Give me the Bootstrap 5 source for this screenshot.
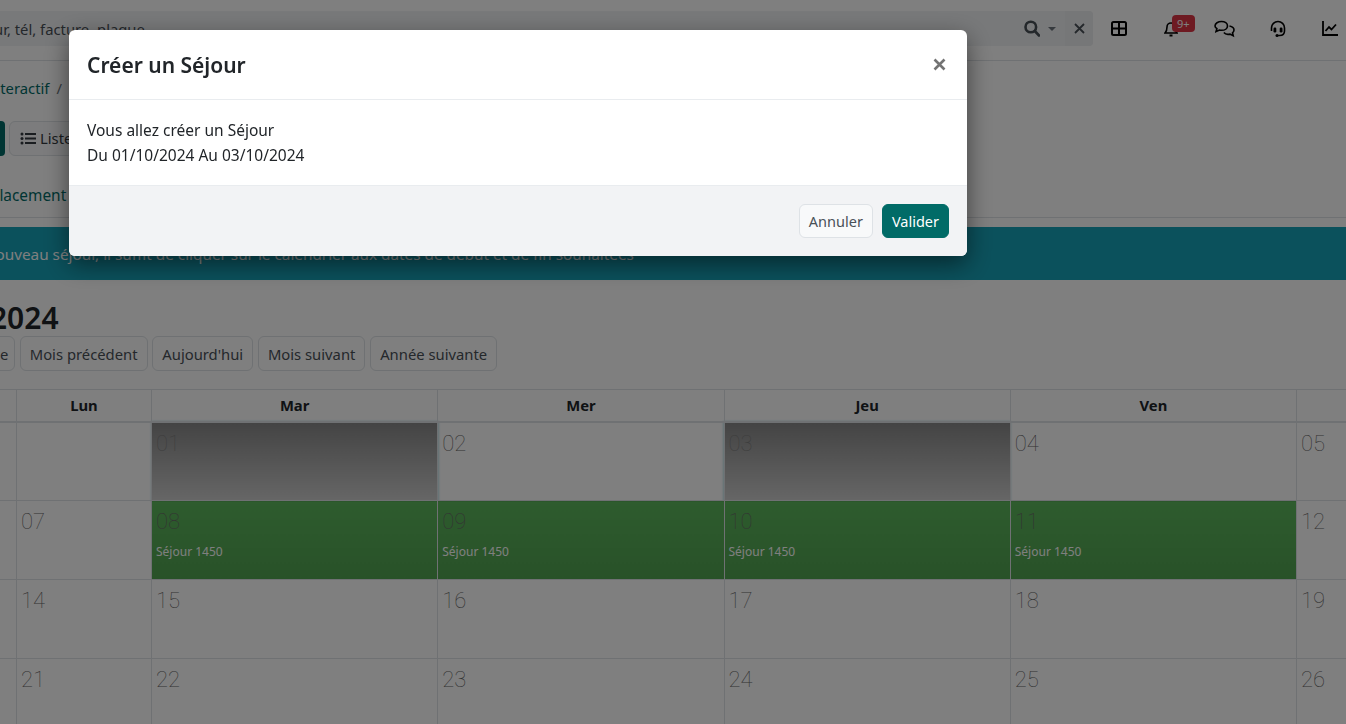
<!DOCTYPE html>
<html lang="fr">
<head>
  <meta charset="UTF-8">
  <meta name="viewport" content="width=device-width, initial-scale=1.0">
  <title>Calendrier interactif</title>
  <link href="https://cdn.jsdelivr.net/npm/bootstrap@5.3.0/dist/css/bootstrap.min.css" rel="stylesheet">
  <script src="https://cdn.jsdelivr.net/npm/bootstrap@5.3.0/dist/js/bootstrap.bundle.min.js"></script>
  <style>
    html, body { height: 100%; overflow: hidden; }
    body { font-family: "Noto Sans", "Open Sans", sans-serif; font-size: 14.8px; color: #212529; background: #fff; }

    /* page behind the dialog, scrolled sideways in the reference */
    .page-wrap { width: 1346px; overflow: hidden; height: 724px; }
    .top-bar { height: 61px; background: #fff; border-bottom: 1px solid #dee2e6; padding-top: 11px; }
    .search-box { width: 1093px; height: 35px; background: #f1f3f5; border-radius: 0 4px 4px 0; color: #495057; flex-shrink: 0; }
    .search-text { margin-left: -42px; line-height: 38px; white-space: nowrap; }
    .search-glass { margin-left: auto; }
    .search-caret { margin-left: 8px; margin-right: 9px; }
    .search-clear { width: 28px; height: 35px; background: #eceef0; border-radius: 0 4px 4px 0; }
    .top-icons { height: 35px; }
    .top-icon { position: relative; line-height: 0; flex-shrink: 0; }
    .icon-grid { margin-left: 18px; }
    .icon-bell { margin-left: 37px; }
    .icon-chat { margin-left: 36px; }
    .icon-headset { margin-left: 35px; }
    .icon-chart { margin-left: 36px; }
    .bell-badge { position: absolute; left: 8px; top: -5px; background: #dc3545; color: #fff; font-size: 11px; line-height: 13px; padding: 2px 5px; border-radius: 4px; white-space: nowrap; }

    .crumb-row { height: 60px; line-height: 54px; color: #016b67; white-space: nowrap; margin-left: -89px; }
    .crumb-sep { color: #6c757d; margin: 0 7px; }
    .tool-row { height: 35px; }
    .btn-main-part { width: 5px; height: 35px; background: #016b67; border-radius: 0 4px 4px 0; }
    .btn-liste { height: 35px; margin-left: 4px; padding: 0 12px 0 10px; font-size: 14.8px; background: #f8f9fa; border: 1px solid #dee2e6; color: #343a40; gap: 4px; }
    .tab-row { height: 62px; border-bottom: 1px solid #dee2e6; padding-top: 30px; line-height: 20px; color: #016b67; white-space: nowrap; font-size: 15.4px; }
    .tab-text { margin-left: -30px; display: block; }
    .info-strip { margin-top: 9px; height: 53px; line-height: 54px; background: #17a2b8; color: #fff; white-space: nowrap; font-size: 15.3px; }
    .info-text { margin-left: -116px; display: block; }
    .month-title { font-size: 30px; font-weight: 600; line-height: 36px; margin: 20px 0 0 -136px; white-space: nowrap; }
    .nav-row { height: 35px; margin-bottom: 18px; gap: 4.75px; white-space: nowrap; }
    .nav-btn { height: 35px; padding: 1px 9px 0; font-size: 14.8px; color: #495057; background: #fff; border: 1px solid #dee2e6; flex-shrink: 0; }
    .nav-first { margin-left: -129px; width: 144px; }

    .cal-table { table-layout: fixed; width: 1500px; border-collapse: collapse; margin-left: -135px; }
    .cal-table th { height: 32px; text-align: center; font-size: 14.8px; font-weight: 700; padding: 0; border: 1px solid #dee2e6; border-bottom-width: 2px; vertical-align: middle; }
    .cal-table td { height: 79px; padding: 0; border: 1px solid #dee2e6; vertical-align: top; }
    .col-side { width: 151px; }
    .col-lun { width: 135px; }
    .col-day { width: 286.25px; }
    .day-num { display: block; font-family: Roboto, "Noto Sans", sans-serif; font-size: 22px; font-weight: 100; line-height: 28px; padding: 7px 0 0 4px; color: #666; }
    .day-event { display: block; font-size: 12px; line-height: 15px; padding: 8px 0 0 4px; color: #fff; }
    .cell-selected { background: linear-gradient(#888, #ccc); box-shadow: 0 0 2px 1px #bfe0e6; }
    .cell-selected .day-num { color: #7c7c7c; }
    .cell-stay { background: linear-gradient(#5cb85c, #51a351); }

    /* dialog */
    .dialog-box { width: 898px; max-width: none; margin: 30px 0 0 69px; }
    .dialog-box .modal-content { border: 0; border-radius: 6px; box-shadow: 0 .5rem 1.5rem rgba(0,0,0,.5); }
    .dialog-box .modal-header { padding: 2px 21px 0 18px; height: 70px; border-bottom: 1px solid #e9ecef; }
    .dialog-box .modal-title { font-size: 21px; font-weight: 600; color: #212529; }
    .dialog-close { border: 0; background: none; padding: 0; margin-top: -2px; line-height: 0; }
    .dialog-box .modal-body { padding: 18px 18px 17px; height: 85px; line-height: 25px; font-size: 15.5px; color: #212529; }
    .dialog-box .modal-footer { background: #f2f3f5; height: 71px; padding: 0 18px; border-top: 1px solid #e9ecef; border-radius: 0 0 6px 6px; gap: 9px; }
    .dialog-box .modal-footer > * { margin: 0; }
    .btn-annuler { height: 34px; padding: 1px 9px 0; font-size: 14.5px; background: #f8f9fa; border: 1px solid #dee2e6; color: #495057; }
    .btn-valider { height: 34px; padding: 1px 9px 0; font-size: 14.5px; background: #016b67; border: 1px solid #016b67; color: #fff; }
  </style>
</head>
<body>

<div class="page-wrap">
  <div class="top-bar d-flex">
    <div class="search-box d-flex align-items-center">
      <span class="search-text">Moteur, tél, facture, plaque</span>
      <svg class="search-glass" width="16" height="17" viewBox="0 0 16 17" fill="none" stroke="#495057" stroke-width="2.600"><circle cx="6.800" cy="7" r="5.300"/><path d="M10.800 11 15 15.500" stroke-linecap="round"/></svg>
      <svg class="search-caret" width="8" height="4" viewBox="0 0 8 4"><path d="M0 0h8L4 4z" fill="#6c757d"/></svg>
      <span class="search-clear d-flex align-items-center justify-content-center">
        <svg width="11" height="11" viewBox="0 0 11 11" stroke="#495057" stroke-width="1.800"><path d="M1 1 10 10M10 1 1 10"/></svg>
      </span>
    </div>
    <div class="top-icons d-flex align-items-center">
      <span class="top-icon icon-grid">
        <svg width="16" height="15" viewBox="0 0 16 15" fill="none" stroke="#000" stroke-width="2"><rect x="1" y="1" width="14" height="13" rx="1.500"/><path d="M1 7.500h14M8 1v13"/></svg>
      </span>
      <span class="top-icon icon-bell">
        <svg width="14" height="17" viewBox="0 0 14 17" fill="none" stroke="#000" stroke-width="1.600"><path d="M1 13c1.500-1.500 2-3 2-6a4 4 0 0 1 8 0c0 3 .5 4.500 2 6z"/><path d="M5.500 15.500h3" stroke-width="2"/></svg>
        <span class="bell-badge">9+</span>
      </span>
      <span class="top-icon icon-chat">
        <svg width="21" height="18" viewBox="0 0 21 18" fill="none" stroke="#000" stroke-width="1.600"><path d="M7.500 1.500c3.400 0 6 1.900 6 4.400s-2.600 4.400-6 4.400c-.7 0-1.400-.1-2-.3L2 11.500l.9-2.800C1.700 7.800 1 6.900 1 5.900c0-2.500 3.100-4.400 6.500-4.400z"/><path d="M15.500 6c2.500.5 4.500 1.900 4.500 4 0 1.100-.6 2.100-1.500 2.800l.7 3-3.200-1.700c-2.400.5-5-.1-6.100-1.600"/></svg>
      </span>
      <span class="top-icon icon-headset">
        <svg width="16" height="18" viewBox="0 0 16 18" fill="none" stroke="#000" stroke-width="1.600"><path d="M1.500 11V8a6.500 6.500 0 0 1 13 0v3c0 2.700-2 4.500-5 4.500H7"/><rect x="3.500" y="7.500" width="2.800" height="5" rx="1.200" fill="#000" stroke="none"/><rect x="9.700" y="7.500" width="2.800" height="5" rx="1.200" fill="#000" stroke="none"/><circle cx="7" cy="15.500" r="1.500" fill="#000" stroke="none"/></svg>
      </span>
      <span class="top-icon icon-chart">
        <svg width="16" height="15" viewBox="0 0 16 15" fill="none" stroke="#000" stroke-width="1.800"><path d="M1 0v14h15"/><path d="M3.500 10 7 6l2.500 2.500L14 3.500"/></svg>
      </span>
    </div>
  </div>

  <div class="crumb-row">Calendrier interactif<span class="crumb-sep">/</span><span>Séjour</span></div>

  <div class="tool-row d-flex">
    <div class="btn-main-part"></div>
    <button type="button" class="btn btn-liste d-flex align-items-center">
      <svg width="16" height="13" viewBox="0 0 16 13" fill="#343a40"><circle cx="2" cy="2" r="1.500"/><circle cx="2" cy="6.500" r="1.500"/><circle cx="2" cy="11" r="1.500"/><rect x="5" y="1" width="11" height="2"/><rect x="5" y="5.500" width="11" height="2"/><rect x="5" y="10" width="11" height="2"/></svg>
      Liste
    </button>
  </div>

  <div class="tab-row"><span class="tab-text">Déplacement</span></div>

  <div class="info-strip"><span class="info-text">Pour créer un nouveau séjour, il suffit de cliquer sur le calendrier aux dates de début et de fin souhaitées</span></div>

  <div class="month-title">Octobre 2024</div>
  <div class="nav-row d-flex">
    <button type="button" class="btn nav-btn nav-first">Année précédente</button>
    <button type="button" class="btn nav-btn">Mois précédent</button>
    <button type="button" class="btn nav-btn">Aujourd'hui</button>
    <button type="button" class="btn nav-btn">Mois suivant</button>
    <button type="button" class="btn nav-btn">Année suivante</button>
  </div>

  <table class="cal-table">
    <colgroup>
      <col class="col-side"><col class="col-lun"><col class="col-day"><col class="col-day"><col class="col-day"><col class="col-day"><col class="col-side">
    </colgroup>
    <thead>
      <tr><th>Dim</th><th>Lun</th><th>Mar</th><th>Mer</th><th>Jeu</th><th>Ven</th><th>Sam</th></tr>
    </thead>
    <tbody id="calBody"></tbody>
  </table>
</div>

<div class="modal-backdrop show"></div>
<div class="modal d-block" tabindex="-1">
  <div class="modal-dialog dialog-box">
    <div class="modal-content">
      <div class="modal-header">
        <h5 class="modal-title">Créer un Séjour</h5>
        <button type="button" class="dialog-close ms-auto" aria-label="Fermer">
          <svg width="13" height="13" viewBox="0 0 13 13" stroke="#737373" stroke-width="2.600"><path d="M1.500 1.500 11.500 11.500M11.500 1.500 1.500 11.500"/></svg>
        </button>
      </div>
      <div class="modal-body">
        Vous allez créer un Séjour<br>
        Du 01/10/2024 Au 03/10/2024
      </div>
      <div class="modal-footer">
        <button type="button" class="btn btn-annuler">Annuler</button>
        <button type="button" class="btn btn-valider">Valider</button>
      </div>
    </div>
  </div>
</div>

<script>
  // weeks of the calendar, Sun to Sat
  const weeks = [
    ['', '', '01', '02', '03', '04', '05'],
    ['06', '07', '08', '09', '10', '11', '12'],
    ['13', '14', '15', '16', '17', '18', '19'],
    ['20', '21', '22', '23', '24', '25', '26']
  ];
  const selected = ['01', '03'];
  const stay = ['08', '09', '10', '11'];
  const body = document.getElementById('calBody');
  weeks.forEach(week => {
    const tr = document.createElement('tr');
    week.forEach(day => {
      const td = document.createElement('td');
      if (selected.includes(day)) td.className = 'cell-selected';
      if (stay.includes(day)) td.className = 'cell-stay';
      if (day) td.innerHTML = `<span class="day-num">${day}</span>`;
      if (stay.includes(day)) td.innerHTML += '<span class="day-event">Séjour 1450</span>';
      tr.appendChild(td);
    });
    body.appendChild(tr);
  });
</script>
</body>
</html>
